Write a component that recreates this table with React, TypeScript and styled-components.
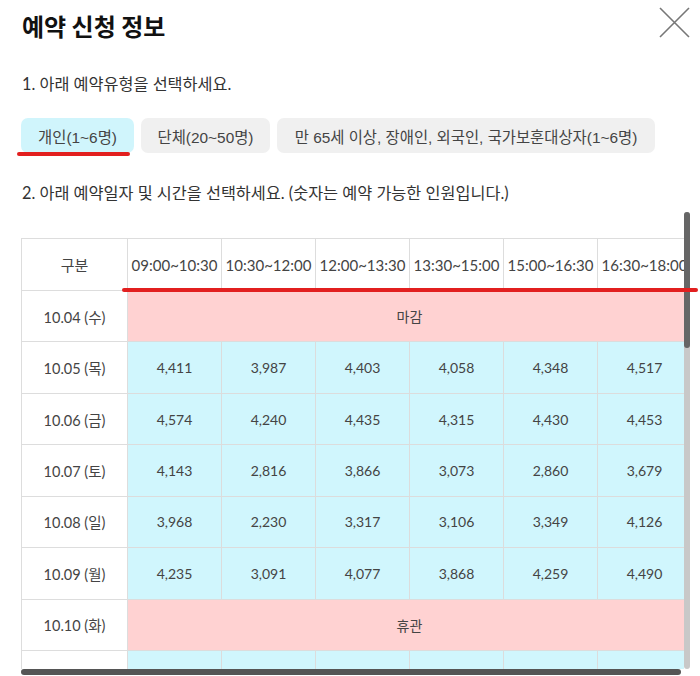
import styled, { createGlobalStyle } from 'styled-components'

const GlobalStyle = createGlobalStyle`
  body {
    margin: 0;
    background: #fff;
    font-family: Lato, "Noto Sans CJK KR", sans-serif;
    color: #333;
  }
`

const Page = styled.div`
  display: flex;
  flex-direction: column;
  padding-left: 21px;
`

const Header = styled.header`
  display: flex;
  justify-content: space-between;
  align-items: flex-start;
  padding: 7px 10px 0 0;
`

const Title = styled.h1`
  margin: 3px 0 0 1px;
  font-family: "Noto Sans CJK KR", sans-serif;
  font-size: 24px;
  line-height: 32px;
  font-weight: 700;
  color: #111;
`

const CloseButton = styled.button`
  border: none;
  background: none;
  padding: 0;
  width: 31px;
  height: 31px;
  cursor: pointer;
`

const Step = styled.p<{ $top: number }>`
  margin: ${({ $top }) => $top}px 0 0 1px;
  font-size: 16.3px;
  line-height: 22px;
  color: #333;
`

const ButtonRow = styled.div`
  position: relative;
  display: flex;
  gap: 7px;
  margin-top: 23px;
`

const TypeButton = styled.button<{ $active?: boolean; $width: number }>`
  width: ${({ $width }) => $width}px;
  height: 35px;
  padding: 0;
  border: none;
  border-radius: 7px;
  background: ${({ $active }) => ($active ? '#d0f5fc' : '#f0f0f0')};
  font-family: "Liberation Sans", "Noto Sans CJK KR", sans-serif;
  font-size: 15.4px;
  color: #444;
  white-space: nowrap;
  cursor: pointer;
`

const Mark = styled.span<{ $left: number; $top: number; $width: number }>`
  position: absolute;
  left: ${({ $left }) => $left}px;
  top: ${({ $top }) => $top}px;
  width: ${({ $width }) => $width}px;
  height: 4px;
  border-radius: 2px;
  background: #e21f1f;
`

const TableArea = styled.div`
  position: relative;
  width: 669px;
  height: 464px;
  margin-top: 8px;
`

const Scroller = styled.div`
  box-sizing: border-box;
  width: 663px;
  height: 457px;
  padding-top: 26px;
  overflow: auto;
  scrollbar-width: none;
`

const ScrollTrack = styled.div<{ $vertical?: boolean }>`
  position: absolute;
  border-radius: 3px;
  ${({ $vertical }) =>
    $vertical
      ? 'right: 0; top: 0; width: 6px; height: 457px; background: #c8c8c8;'
      : 'left: 0; bottom: 1px; width: 660px; height: 6px; background: transparent;'}
`

const ScrollThumb = styled.div<{ $vertical?: boolean }>`
  border-radius: 3px;
  background: ${({ $vertical }) => ($vertical ? '#666' : '#555')};
  width: ${({ $vertical }) => ($vertical ? '6px' : '100%')};
  height: ${({ $vertical }) => ($vertical ? '136px' : '6px')};
`

const Table = styled.table`
  width: 670px;
  table-layout: fixed;
  border-collapse: collapse;
  font-size: 14px;
  color: #444;
`

const HeadCell = styled.th`
  height: 51px;
  padding: 0;
  border: 1px solid #ddd;
  background: #fff;
  font-weight: 400;
  font-size: 15px;
  color: #444;
  white-space: nowrap;
`

const Row = styled.tr`
  height: 51.43px;
`

const DateCell = styled.td`
  padding: 0;
  border: 1px solid #ddd;
  background: #fff;
  text-align: center;
  font-size: 14.5px;
`

const Cell = styled.td<{ $closed?: boolean }>`
  padding: 0;
  border: 1px solid #dcdcdc;
  background: ${({ $closed }) => ($closed ? '#ffd2d2' : '#d0f6fd')};
  text-align: center;
`

type Day = { date: string; day: string; values?: number[]; note?: string }

const times = ['09:00~10:30', '10:30~12:00', '12:00~13:30', '13:30~15:00', '15:00~16:30', '16:30~18:00']
const weekdays = ['수', '목', '금', '토', '일', '월', '화']

const known: Record<number, number[]> = {
  5: [4411, 3987, 4403, 4058, 4348, 4517],
  6: [4574, 4240, 4435, 4315, 4430, 4453],
  7: [4143, 2816, 3866, 3073, 2860, 3679],
  8: [3968, 2230, 3317, 3106, 3349, 4126],
  9: [4235, 3091, 4077, 3868, 4259, 4490],
}

const days: Day[] = Array.from({ length: 28 }, (_, i) => {
  const d = 4 + i
  const day = weekdays[i % 7]
  const date = `10.${String(d).padStart(2, '0')}`
  if (d === 4) return { date, day, note: '마감' }
  if (day === '화') return { date, day, note: '휴관' }
  const values = known[d] ?? times.map((_, j) => 3900 + ((d * 137 + j * 251) % 700))
  return { date, day, values }
})

function CloseIcon() {
  return (
    <svg width="31" height="31" viewBox="0 0 31 31">
      <path d="M1 1 L30 30 M30 1 L1 30" stroke="#777" strokeWidth="1.6" fill="none" />
    </svg>
  )
}

export default function App() {
  return (
    <Page>
      <GlobalStyle />
      <Header>
        <Title>예약 신청 정보</Title>
        <CloseButton aria-label="닫기">
          <CloseIcon />
        </CloseButton>
      </Header>

      <Step $top={31}>1. 아래 예약유형을 선택하세요.</Step>
      <ButtonRow>
        <TypeButton $active $width={113}>개인(1~6명)</TypeButton>
        <TypeButton $width={129}>단체(20~50명)</TypeButton>
        <TypeButton $width={378}>만 65세 이상, 장애인, 외국인, 국가보훈대상자(1~6명)</TypeButton>
        <Mark $left={-4} $top={34} $width={113} />
      </ButtonRow>

      <Step $top={29}>2. 아래 예약일자 및 시간을 선택하세요. (숫자는 예약 가능한 인원입니다.)</Step>
      <TableArea>
        <Scroller>
          <Table>
            <colgroup>
              <col style={{ width: 106 }} />
              {times.map((t) => (
                <col key={t} style={{ width: 94 }} />
              ))}
            </colgroup>
            <thead>
              <tr>
                <HeadCell>구분</HeadCell>
                {times.map((t) => (
                  <HeadCell key={t}>{t}</HeadCell>
                ))}
              </tr>
            </thead>
            <tbody>
              {days.map((d) => (
                <Row key={d.date}>
                  <DateCell>
                    {d.date} ({d.day})
                  </DateCell>
                  {d.note ? (
                    <Cell $closed colSpan={6}>
                      {d.note}
                    </Cell>
                  ) : (
                    d.values!.map((v, j) => <Cell key={j}>{v.toLocaleString('en-US')}</Cell>)
                  )}
                </Row>
              ))}
            </tbody>
          </Table>
        </Scroller>
        <ScrollTrack $vertical>
          <ScrollThumb $vertical />
        </ScrollTrack>
        <ScrollTrack>
          <ScrollThumb />
        </ScrollTrack>
        <Mark $left={101} $top={76} $width={576} />
      </TableArea>
    </Page>
  )
}
